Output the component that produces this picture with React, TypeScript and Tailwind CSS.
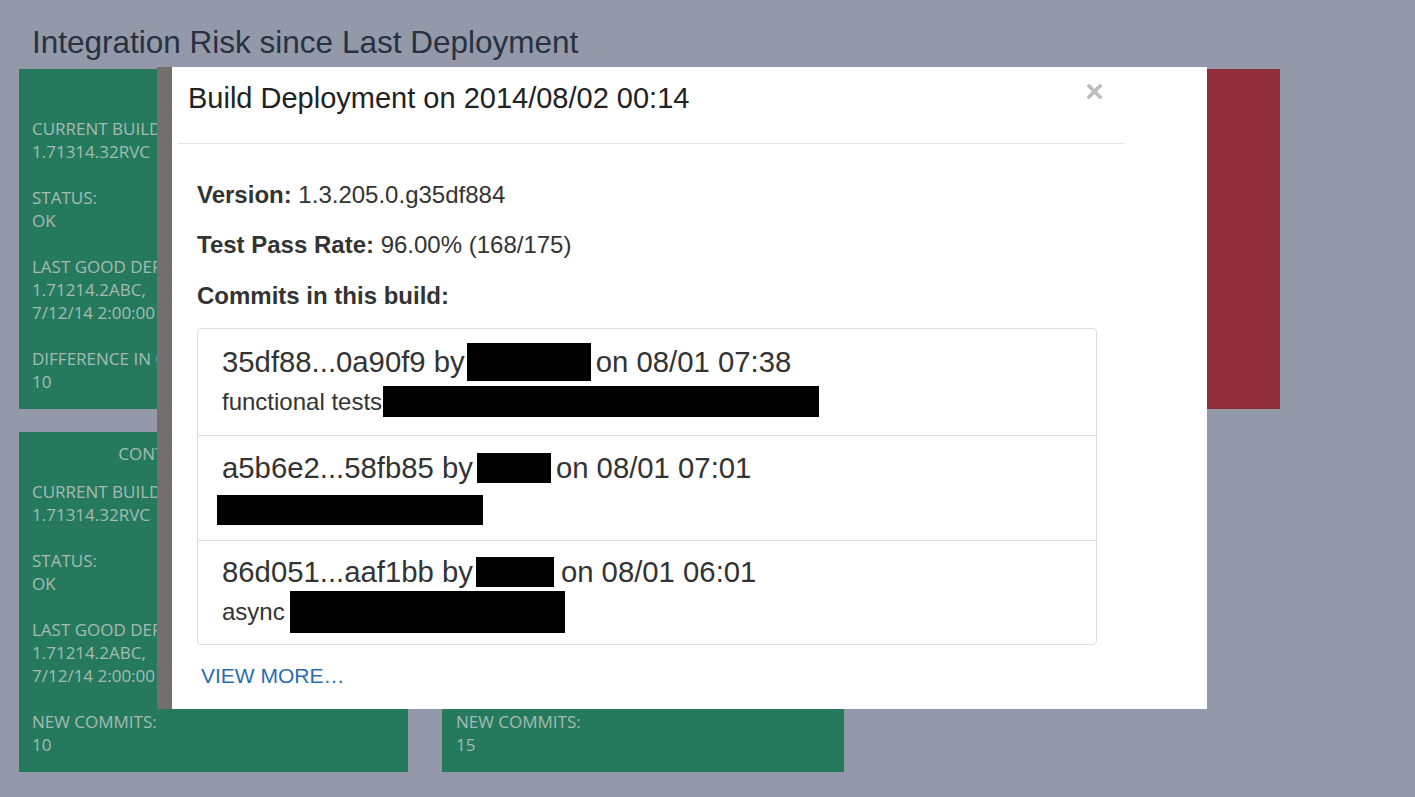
import React from "react";

type Group = string[];

const cardFont = { fontFamily: '"Open Sans", "Liberation Sans", sans-serif' };
const modalFont = { fontFamily: '"Liberation Sans", Arial, sans-serif' };

function Card({
  title,
  groups,
  color,
  width,
  pad,
}: {
  title: string;
  groups: Group[];
  color: string;
  width: string;
  pad: string;
}) {
  return (
    <div
      className={`${width} ${color} ${pad} h-[340px] shrink-0 pt-[10px] text-[17px] leading-[23px] text-[#a6bab3] overflow-hidden`}
      style={cardFont}
    >
      <div className="h-[23px] text-center pr-[13px] whitespace-nowrap">{title}</div>
      <div className="mt-[15px] flex flex-col gap-[23px]">
        {groups.map((g, i) => (
          <div key={i} className="whitespace-nowrap">
            {g.map((l, j) => (
              <div key={j}>{l}</div>
            ))}
          </div>
        ))}
      </div>
    </div>
  );
}

function Box({ w, h, cls = "" }: { w: string; h: string; cls?: string }) {
  return <span className={`inline-block bg-black shrink-0 ${w} ${h} ${cls}`} />;
}

export default function App() {
  const groupsA: Group[] = [
    ["CURRENT BUILD:", "1.71314.32RVC"],
    ["STATUS:", "OK"],
    ["LAST GOOD DEPLOYMENT:", "1.71214.2ABC,", "7/12/14 2:00:00 PM"],
    ["DIFFERENCE IN COMMITS:", "10"],
  ];
  const groupsB: Group[] = [
    ["CURRENT BUILD:", "1.71314.32RVC"],
    ["STATUS:", "OK"],
    ["LAST GOOD DEPLOYMENT:", "1.71214.2ABC,", "7/12/14 2:00:00 PM"],
    ["NEW COMMITS:", "10"],
  ];
  const groupsC: Group[] = [
    ["CURRENT BUILD:", "1.71314.32RVC"],
    ["STATUS:", "OK"],
    ["LAST GOOD DEPLOYMENT:", "1.71214.2ABC,", "7/12/14 2:00:00 PM"],
    ["NEW COMMITS:", "15"],
  ];

  return (
    <div className="relative w-[1415px] h-[797px] overflow-hidden bg-[#9399a8]">
      <h1
        className="pl-[32px] pt-[25px] text-[31.5px] leading-[34px] text-[#283142] font-normal"
        style={modalFont}
      >
        Integration Risk since Last Deployment
      </h1>

      <div className="mt-[10px] pl-[19px] flex flex-col gap-[23px]">
        <div className="flex gap-[34px]">
          <Card title="" groups={groupsA} color="bg-[#257a5e]" width="w-[389px]" pad="pl-[13px]" />
          <Card title="" groups={[]} color="bg-[#257a5e]" width="w-[402px]" pad="pl-[14px]" />
          <Card title="" groups={[]} color="bg-[#922d3c]" width="w-[402px]" pad="pl-[14px]" />
        </div>
        <div className="flex gap-[34px]">
          <Card title="CONTINUOUS DELIVERY" groups={groupsB} color="bg-[#257a5e]" width="w-[389px]" pad="pl-[13px]" />
          <Card title="NIGHTLY" groups={groupsC} color="bg-[#257a5e]" width="w-[402px]" pad="pl-[14px]" />
        </div>
      </div>

      {/* Modal */}
      <div
        className="absolute left-[157px] top-[67px] w-[1050px] h-[642px] bg-white border-l-[15px] border-[#736f6f] text-[#333]"
        style={modalFont}
      >
        <div className="relative ml-[6px] w-[947px] h-[77px] border-b border-[#e5e5e5] pt-[14px] pl-[10px]">
          <div className="text-[29px] leading-[34px] text-[#222]">Build Deployment on 2014/08/02 00:14</div>
          <svg
            className="absolute left-[909px] top-[17px]"
            width="15"
            height="15"
            viewBox="0 0 15 15"
          >
            <path d="M2 2 L13 13 M13 2 L2 13" stroke="#bdbdbd" strokeWidth="3.6" strokeLinecap="square" />
          </svg>
        </div>

        <div className="pl-[25px] pt-[38px]">
          <div className="text-[24px] leading-[26px]">
            <span className="font-bold">Version:</span> 1.3.205.0.g35df884
          </div>
          <div className="mt-[24px] text-[24px] leading-[26px]">
            <span className="font-bold">Test Pass Rate:</span> 96.00% (168/175)
          </div>
          <div className="mt-[25px] text-[24px] leading-[26px] font-bold">Commits in this build:</div>

          <div className="mt-[19px] w-[900px] border border-[#dddddd] rounded-[4px]">
            {/* item 1 */}
            <div className="h-[106px] px-[24px] pt-[14px]">
              <div className="flex items-center h-[38px] text-[29.3px] leading-[34px] whitespace-nowrap">
                <span>35df88...0a90f9 by</span>
                <Box w="w-[124px]" h="h-[38px]" cls="ml-[2px] mr-[5px]" />
                <span>on 08/01 07:38</span>
              </div>
              <div className="mt-[5px] flex items-center h-[31px] text-[24px] leading-[28px] whitespace-nowrap">
                <span>functional tests</span>
                <Box w="w-[436px]" h="h-[31px]" cls="ml-[1px]" />
              </div>
            </div>
            {/* item 2 */}
            <div className="h-[105px] px-[24px] pt-[17px] border-t border-[#dddddd]">
              <div className="flex items-center h-[30px] text-[29.3px] leading-[34px] whitespace-nowrap">
                <span>a5b6e2...58fb85 by</span>
                <Box w="w-[74px]" h="h-[30px]" cls="ml-[4px] mr-[5px]" />
                <span>on 08/01 07:01</span>
              </div>
              <div className="mt-[12px] flex items-center h-[30px]">
                <Box w="w-[266px]" h="h-[30px]" cls="-ml-[5px]" />
              </div>
            </div>
            {/* item 3 */}
            <div className="h-[104px] px-[24px] pt-[16px] border-t border-[#dddddd]">
              <div className="flex items-center h-[30px] text-[29.3px] leading-[34px] whitespace-nowrap">
                <span>86d051...aaf1bb by</span>
                <Box w="w-[78px]" h="h-[30px]" cls="ml-[3px] mr-[7px]" />
                <span>on 08/01 06:01</span>
              </div>
              <div className="mt-[4px] flex items-center h-[42px] text-[24px] leading-[28px] whitespace-nowrap">
                <span>async</span>
                <Box w="w-[275px]" h="h-[42px]" cls="ml-[5px]" />
              </div>
            </div>
          </div>

          <div className="mt-[19px] pl-[4px] text-[21px] leading-[24px] text-[#2a6bb8]">VIEW MORE…</div>
        </div>
      </div>
    </div>
  );
}
